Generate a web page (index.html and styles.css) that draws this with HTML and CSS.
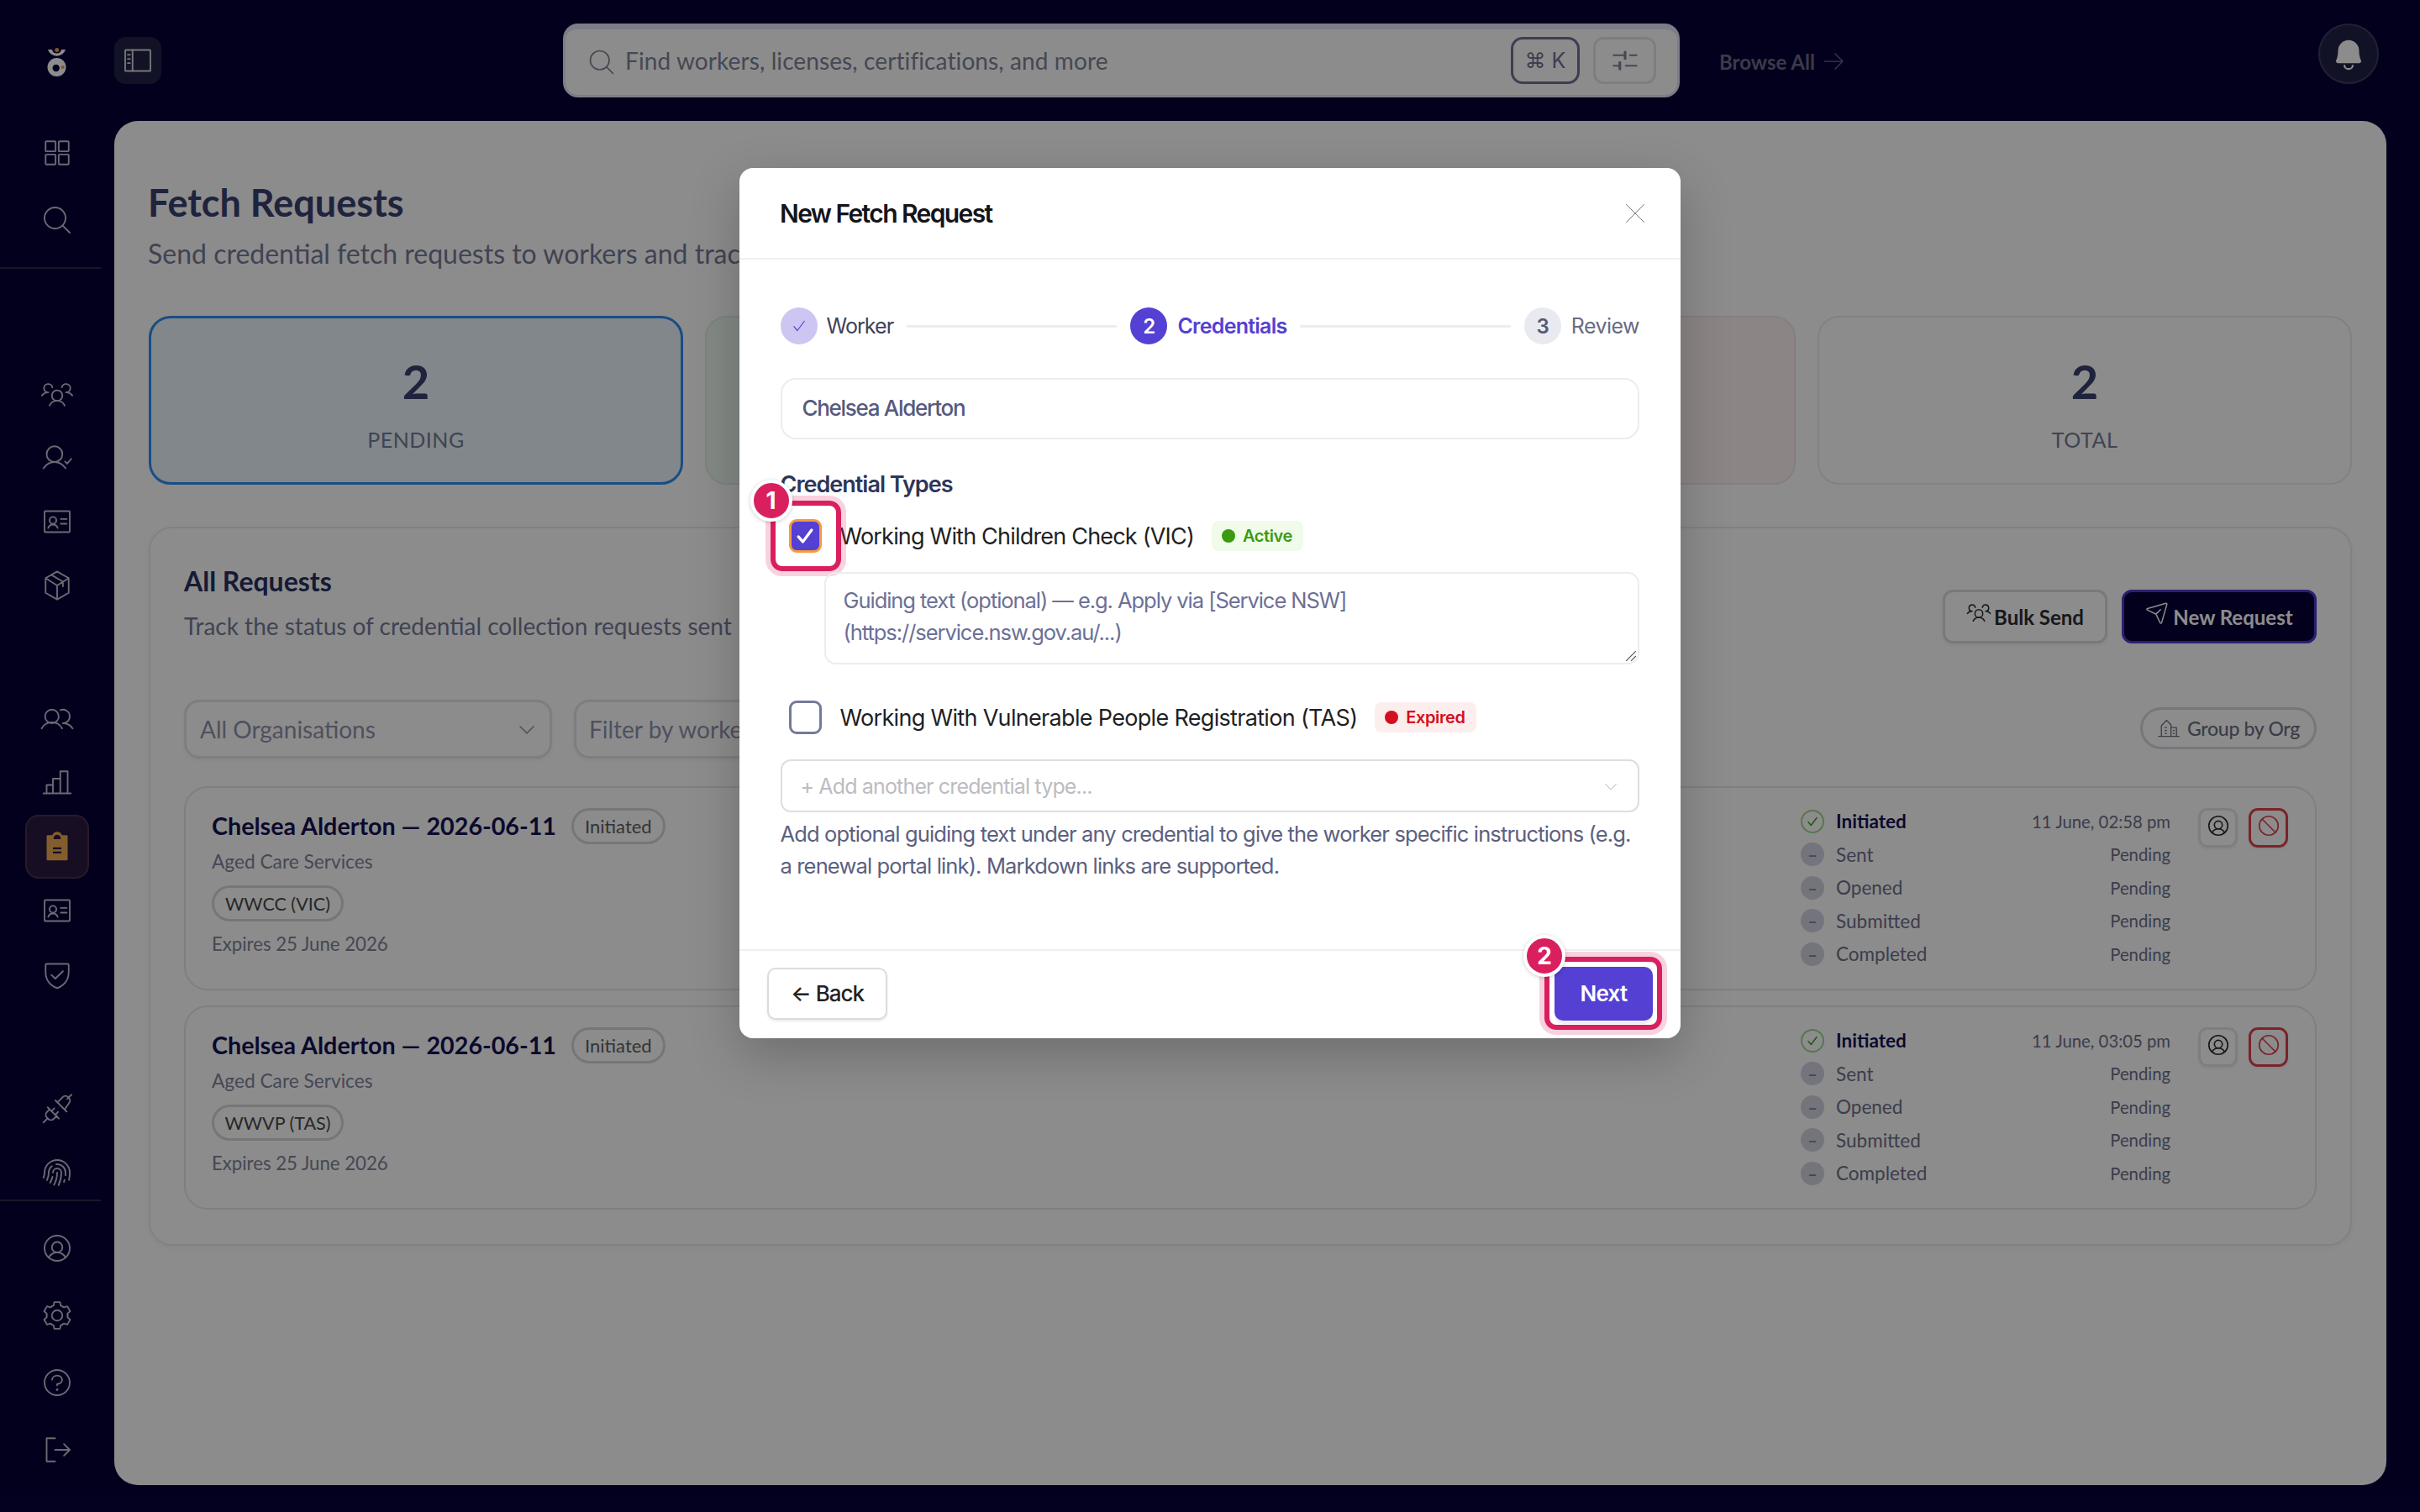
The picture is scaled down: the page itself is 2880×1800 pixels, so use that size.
FILE: index.html
```html
<!DOCTYPE html>
<html lang="en">
<head>
<meta charset="utf-8">
<title>Fetch Requests</title>
<link rel="stylesheet" href="styles.css">
</head>
<body>
<svg class="defs" width="0" height="0" aria-hidden="true">
  <defs>
    <symbol id="i-grid" viewBox="0 0 256 256"><rect x="40" y="40" width="76" height="76" rx="6"/><rect x="140" y="40" width="76" height="76" rx="6"/><rect x="40" y="140" width="76" height="76" rx="6"/><rect x="140" y="140" width="76" height="76" rx="6"/></symbol>
    <symbol id="i-search" viewBox="0 0 256 256"><circle cx="112" cy="112" r="80"/><path d="M168.6 168.6 224 224"/></symbol>
    <symbol id="i-users3" viewBox="0 0 256 256"><circle cx="128" cy="140" r="40"/><path d="M196 116a59.8 59.8 0 0 1 48 24M12 140a59.8 59.8 0 0 1 48-24M70.4 216a64.1 64.1 0 0 1 115.2 0M60 116a32 32 0 1 1 31.4-38M164.6 78A32 32 0 1 1 196 116"/></symbol>
    <symbol id="i-usercheck" viewBox="0 0 256 256"><circle cx="108" cy="100" r="60"/><path d="M24 208c20.6-30 49.6-48 84-48s63.4 18 84 48M188 156l16 16 32-36"/></symbol>
    <symbol id="i-idcard" viewBox="0 0 256 256"><rect x="32" y="48" width="192" height="160" rx="6"/><circle cx="96" cy="118" r="26"/><path d="M60 176a38 38 0 0 1 72 0M156 108h44M156 144h44"/></symbol>
    <symbol id="i-package" viewBox="0 0 256 256"><path d="M128 22 216 72v112l-88 50-88-50V72ZM40 72l88 56 88-56M128 128v106M84 47l88 52v36"/></symbol>
    <symbol id="i-users" viewBox="0 0 256 256"><circle cx="88" cy="108" r="52"/><path d="M10.2 200a88 88 0 0 1 155.6 0M172 160a87.9 87.9 0 0 1 73.8 40M152.7 59.7A52 52 0 1 1 172 160"/></symbol>
    <symbol id="i-chart" viewBox="0 0 256 256"><path d="M48 208v-64h48M96 208V96h56M152 208V40h56v168M232 208H24"/></symbol>
    <symbol id="i-shield" viewBox="0 0 256 256"><path d="M216 112V56a8 8 0 0 0-8-8H48a8 8 0 0 0-8 8v56c0 96 88 120 88 120s88-24 88-120ZM172 104l-58 56-30-28"/></symbol>
    <symbol id="i-plug" viewBox="0 0 256 256"><path d="M115 64l85 85M130 79l40-40a30 30 0 0 1 42 0l5 5a30 30 0 0 1 0 42l-32 48M205 52l32-31M56 117l85 85M71 132l-21 21a30 30 0 0 0 0 42l10 10a30 30 0 0 0 42 0l24-24M50 205l-26 27M85 146l22-22M113 174l22-22"/></symbol>
    <symbol id="i-finger" viewBox="0 0 256 256"><path d="M50.7 184.9A127.5 127.5 0 0 0 64 128a63.9 63.9 0 0 1 24-50M128 128a191.1 191.1 0 0 1-24 93M96 128a32 32 0 0 1 64 0 223.1 223.1 0 0 1-21.3 95.4M218.6 184a289.5 289.5 0 0 0 5.4-56 96 96 0 0 0-192 0 95.8 95.8 0 0 1-8 38.4M92.8 160a158.9 158.9 0 0 1-18.7 44.7M120.8 64.5A64 64 0 0 1 192 128c0 6.7-.2 13.4-.6 20M183.9 184c-1.2 5.4-2.5 10.7-4 16"/></symbol>
    <symbol id="i-usercircle" viewBox="0 0 256 256"><circle cx="128" cy="128" r="96"/><circle cx="128" cy="120" r="40"/><path d="M63.8 199.4a72 72 0 0 1 128.4 0"/></symbol>
    <symbol id="i-gear" viewBox="0 0 256 256"><circle cx="128" cy="128" r="40"/><g transform="translate(128 128)"><path id="tooth" d="M-40-69.3-27.4-75.2-21.6-101.7H21.6L27.4-75.2 40-69.3"/><use href="#tooth" transform="rotate(60)"/><use href="#tooth" transform="rotate(120)"/><use href="#tooth" transform="rotate(180)"/><use href="#tooth" transform="rotate(240)"/><use href="#tooth" transform="rotate(300)"/></g></symbol>
    <symbol id="i-help" viewBox="0 0 256 256"><circle cx="128" cy="128" r="96"/><path d="M128 148v-10c20 0 38-12 38-32s-18-32-38-32-38 12-38 32"/><circle class="dot" cx="128" cy="182" r="9"/></symbol>
    <symbol id="i-signout" viewBox="0 0 256 256"><path d="M112 40H48v176h64M112 128h112M180 84l44 44-44 44"/></symbol>
    <symbol id="i-sidebar" viewBox="0 0 256 256"><rect x="32" y="48" width="192" height="160" rx="4"/><path d="M88 48v160M52 84h16M52 116h16M52 148h16"/></symbol>
    <symbol id="i-sliders" viewBox="0 0 256 256"><path d="M40 88h84M164 88h52M124 60v56M132 60v56M172 88h8M40 168h44M132 168h84M92 140v56M84 140v56"/></symbol>
    <symbol id="i-arrow" viewBox="0 0 256 256"><path d="M40 128h176M144 56l72 72-72 72"/></symbol>
    <symbol id="i-chevron" viewBox="0 0 256 256"><path d="M48 96l80 80 80-80"/></symbol>
    <symbol id="i-plane" viewBox="0 0 256 256"><path d="M210.3 35.9 22.3 88.9a8 8 0 0 0-1.2 15L107 145a8 8 0 0 1 3.8 3.8l40.7 86a8 8 0 0 0 15-1.2l53.6-188a8 8 0 0 0-9.8-9.7ZM109.8 146.2 155 101"/></symbol>
    <symbol id="i-building" viewBox="0 0 256 256"><path d="M16 216h224M48 216V100l56-60 48 52v124M152 120h60v96M88 120h16M88 152h16M88 184h16M176 152h12M176 184h12"/></symbol>
    <symbol id="i-ban" viewBox="0 0 256 256"><circle cx="128" cy="128" r="96"/><path d="M60 60l136 136"/></symbol>
    <symbol id="i-check" viewBox="0 0 256 256"><path d="M56 136l48 56 96-128"/></symbol>
    <symbol id="i-x" viewBox="0 0 256 256"><path d="M32 32l192 192M224 32 32 224"/></symbol>
  </defs>
</svg>

<div class="app">
  <aside class="sidebar">
    <svg class="logo" viewBox="0 0 23 34" aria-hidden="true">
      <path class="logo-body" d="M1 2h5a5.600 5.600 0 0 0 11 0h5a11 11 0 0 1-21 0Z"/>
      <circle class="logo-body" cx="11.500" cy="23" r="11"/>
      <circle class="logo-hole" cx="10.700" cy="24" r="4.200"/>
      <circle class="logo-dot" cx="11.700" cy="2.500" r="2.500"/>
      <circle class="logo-dot" cx="18.700" cy="23" r="2"/>
    </svg>
    <nav class="nav nav-a">
      <a class="nav-item"><svg class="ico"><use href="#i-grid"/></svg></a>
      <a class="nav-item"><svg class="ico"><use href="#i-search"/></svg></a>
    </nav>
    <div class="side-rule"></div>
    <nav class="nav nav-b">
      <a class="nav-item"><svg class="ico"><use href="#i-users3"/></svg></a>
      <a class="nav-item"><svg class="ico"><use href="#i-usercheck"/></svg></a>
      <a class="nav-item"><svg class="ico"><use href="#i-idcard"/></svg></a>
      <a class="nav-item"><svg class="ico"><use href="#i-package"/></svg></a>
    </nav>
    <nav class="nav nav-c">
      <a class="nav-item"><svg class="ico"><use href="#i-users"/></svg></a>
      <a class="nav-item"><svg class="ico"><use href="#i-chart"/></svg></a>
      <a class="nav-item is-active">
        <svg class="ico-clip" viewBox="0 0 256 256"><path class="clip-body" d="M200 40h-36a38 38 0 0 0-72 0H56a8 8 0 0 0-8 8v176a8 8 0 0 0 8 8h144a8 8 0 0 0 8-8V48a8 8 0 0 0-8-8Z"/><path class="clip-marks" d="M96 140h64M96 172h64M108 64a20 20 0 0 1 40 0Z"/></svg>
      </a>
      <a class="nav-item"><svg class="ico"><use href="#i-idcard"/></svg></a>
      <a class="nav-item"><svg class="ico"><use href="#i-shield"/></svg></a>
    </nav>
    <nav class="nav nav-d">
      <a class="nav-item"><svg class="ico"><use href="#i-plug"/></svg></a>
      <a class="nav-item"><svg class="ico"><use href="#i-finger"/></svg></a>
    </nav>
    <div class="side-rule side-rule-flush"></div>
    <nav class="nav nav-e">
      <a class="nav-item"><svg class="ico"><use href="#i-usercircle"/></svg></a>
      <a class="nav-item"><svg class="ico"><use href="#i-gear"/></svg></a>
      <a class="nav-item"><svg class="ico"><use href="#i-help"/></svg></a>
      <a class="nav-item"><svg class="ico"><use href="#i-signout"/></svg></a>
    </nav>
  </aside>

  <div class="content">
    <header class="topbar">
      <button class="toggle"><svg class="ico"><use href="#i-sidebar"/></svg></button>
      <div class="search">
        <svg class="ico search-ico"><use href="#i-search"/></svg>
        <span class="search-text">Find workers, licenses, certifications, and more</span>
        <span class="kbd">⌘ K</span>
        <span class="filter"><svg class="ico"><use href="#i-sliders"/></svg></span>
      </div>
      <a class="browse">Browse All <svg class="ico browse-ico"><use href="#i-arrow"/></svg></a>
      <button class="bell">
        <svg class="bell-ico" viewBox="0 0 256 256"><path d="M221.800 175.900C216.300 166.400 208 139.300 208 104a80 80 0 1 0-160 0c0 35.300-8.300 62.400-13.800 71.900A16 16 0 0 0 48 200h160a16 16 0 0 0 13.800-24.100Z"/><path class="bell-ring" d="M96 212a32 32 0 0 0 64 0"/></svg>
      </button>
    </header>

    <main class="panel">
      <h1 class="page-title">Fetch Requests</h1>
      <p class="page-sub">Send credential fetch requests to workers and track</p>

      <section class="stats">
        <div class="stat stat-pending"><div class="stat-num">2</div><div class="stat-label">PENDING</div></div>
        <div class="stat stat-done"></div>
        <div class="stat stat-fail"></div>
        <div class="stat"><div class="stat-num">2</div><div class="stat-label">TOTAL</div></div>
      </section>

      <section class="requests">
        <div class="req-head">
          <div>
            <h2 class="req-title">All Requests</h2>
            <p class="req-sub">Track the status of credential collection requests sent</p>
          </div>
          <div class="req-actions">
            <button class="btn btn-ghost"><svg class="ico btn-ico"><use href="#i-users3"/></svg>Bulk Send</button>
            <button class="btn btn-dark"><svg class="ico btn-ico"><use href="#i-plane"/></svg>New Request</button>
          </div>
        </div>

        <div class="toolbar">
          <div class="select">All Organisations <svg class="ico sel-chev"><use href="#i-chevron"/></svg></div>
          <div class="filter-input">Filter by worker</div>
          <button class="group-btn"><svg class="ico group-ico"><use href="#i-building"/></svg>Group by Org</button>
        </div>

        <article class="card">
          <div class="card-main">
            <div class="card-head"><h3 class="card-title">Chelsea Alderton — 2026-06-11</h3><span class="pill">Initiated</span></div>
            <div class="card-org">Aged Care Services</div>
            <span class="pill tag">WWCC (VIC)</span>
            <div class="card-exp">Expires 25 June 2026</div>
          </div>
          <ul class="steps">
            <li class="step step-on"><span class="dot-ok"><svg class="ico"><use href="#i-check"/></svg></span><span class="step-name">Initiated</span><span class="step-val">11 June, 02:58 pm</span></li>
            <li class="step"><span class="dot-off">–</span><span class="step-name">Sent</span><span class="step-val">Pending</span></li>
            <li class="step"><span class="dot-off">–</span><span class="step-name">Opened</span><span class="step-val">Pending</span></li>
            <li class="step"><span class="dot-off">–</span><span class="step-name">Submitted</span><span class="step-val">Pending</span></li>
            <li class="step"><span class="dot-off">–</span><span class="step-name">Completed</span><span class="step-val">Pending</span></li>
          </ul>
          <div class="card-btns">
            <button class="mini"><svg class="ico"><use href="#i-usercircle"/></svg></button>
            <button class="mini mini-red"><svg class="ico"><use href="#i-ban"/></svg></button>
          </div>
        </article>

        <article class="card">
          <div class="card-main">
            <div class="card-head"><h3 class="card-title">Chelsea Alderton — 2026-06-11</h3><span class="pill">Initiated</span></div>
            <div class="card-org">Aged Care Services</div>
            <span class="pill tag">WWVP (TAS)</span>
            <div class="card-exp">Expires 25 June 2026</div>
          </div>
          <ul class="steps">
            <li class="step step-on"><span class="dot-ok"><svg class="ico"><use href="#i-check"/></svg></span><span class="step-name">Initiated</span><span class="step-val">11 June, 03:05 pm</span></li>
            <li class="step"><span class="dot-off">–</span><span class="step-name">Sent</span><span class="step-val">Pending</span></li>
            <li class="step"><span class="dot-off">–</span><span class="step-name">Opened</span><span class="step-val">Pending</span></li>
            <li class="step"><span class="dot-off">–</span><span class="step-name">Submitted</span><span class="step-val">Pending</span></li>
            <li class="step"><span class="dot-off">–</span><span class="step-name">Completed</span><span class="step-val">Pending</span></li>
          </ul>
          <div class="card-btns">
            <button class="mini"><svg class="ico"><use href="#i-usercircle"/></svg></button>
            <button class="mini mini-red"><svg class="ico"><use href="#i-ban"/></svg></button>
          </div>
        </article>
      </section>
    </main>
  </div>
</div>

<div class="scrim"></div>

<div class="modal" role="dialog">
  <header class="m-head">
    <h2 class="m-title">New Fetch Request</h2>
    <svg class="ico m-close"><use href="#i-x"/></svg>
  </header>
  <div class="m-body">
    <div class="stepper">
      <span class="num num-done"><svg class="ico"><use href="#i-check"/></svg></span><span class="s-label s-first">Worker</span>
      <span class="s-line"></span>
      <span class="num num-now">2</span><span class="s-label s-now">Credentials</span>
      <span class="s-line"></span>
      <span class="num num-next">3</span><span class="s-label s-next">Review</span>
    </div>
    <div class="m-input">Chelsea Alderton</div>
    <h3 class="m-section">Credential Types</h3>

    <div class="cred cred-first">
      <span class="checkbox is-checked">
        <svg class="ico"><use href="#i-check"/></svg>
        <span class="ring ring-check"></span>
        <span class="marker marker-1">1</span>
      </span>
      <span class="cred-name">Working With Children Check (VIC)</span>
      <span class="badge badge-ok"><i class="badge-dot"></i>Active</span>
    </div>
    <div class="m-textarea">Guiding text (optional) — e.g. Apply via [Service NSW] (https://service.nsw.gov.au/...)
      <svg class="grip" viewBox="0 0 12 12"><path d="M11 1 1 11M11 6 6 11"/></svg>
    </div>

    <div class="cred cred-second">
      <span class="checkbox"></span>
      <span class="cred-name">Working With Vulnerable People Registration (TAS)</span>
      <span class="badge badge-bad"><i class="badge-dot"></i>Expired</span>
    </div>

    <div class="m-select">+ Add another credential type... <svg class="ico m-chev"><use href="#i-chevron"/></svg></div>
    <p class="m-help">Add optional guiding text under any credential to give the worker specific instructions (e.g. a renewal portal link). Markdown links are supported.</p>
  </div>
  <footer class="m-foot">
    <button class="m-back">← Back</button>
    <button class="m-next">Next
      <span class="ring ring-next"></span>
      <span class="marker marker-2">2</span>
    </button>
  </footer>
</div>
</body>
</html>
```
FILE: styles.css
```css
* { box-sizing: border-box; }
html, body { margin: 0; padding: 0; }
body { width: 2880px; height: 1800px; overflow: hidden; position: relative; background: #070038; font-family: "Lato", "Liberation Sans", sans-serif; }
h1, h2, h3, p, ul { margin: 0; padding: 0; }
ul { list-style: none; }
button { font-family: inherit; background: none; border: 0; padding: 0; cursor: pointer; }
.defs { position: absolute; }
.ico { display: block; width: 40px; height: 40px; fill: none; stroke: currentColor; stroke-width: 12; stroke-linecap: round; stroke-linejoin: round; overflow: visible; }
#i-help .dot { fill: currentColor; stroke: none; }

.app { display: flex; width: 2880px; height: 1800px; }

/* sidebar */
.sidebar { width: 136px; flex: none; display: flex; flex-direction: column; color: #c3c3d0; }
.logo { display: block; width: 23px; height: 34px; margin: 57px 0 0 56px; flex: none; }
.logo-body { fill: #fff; }
.logo-hole { fill: #070038; }
.logo-dot { fill: #f59a3d; }
.nav { display: flex; flex-direction: column; align-items: center; width: 136px; }
.nav-item { display: flex; align-items: center; justify-content: center; width: 76px; height: 76px; border-radius: 16px; border: 2px solid transparent; flex: none; }
.nav-a { margin-top: 51px; }
.nav-a .nav-item, .nav-e .nav-item { height: 80px; }
.side-rule { height: 2px; width: 120px; margin-top: 16px; background: #2b2a4d; flex: none; }
.side-rule-flush { margin-top: 0; }
.nav-b { margin-top: 111px; }
.nav-c { margin-top: 83px; }
.nav-d { margin-top: 90px; gap: 12px; }
.nav-d .nav-item { height: 64px; }
.nav-e { margin-top: 16px; }
.is-active { background: #2a1b41; border-color: #4c3048; }
.ico-clip { width: 40px; height: 40px; display: block; }
.clip-body { fill: #f0aa55; }
.clip-marks { fill: #2a1b41; stroke: #2a1b41; stroke-width: 14; }

/* top bar */
.content { flex: 1; min-width: 0; display: flex; flex-direction: column; padding: 0 40px 32px 0; }
.topbar { display: flex; align-items: flex-start; height: 144px; flex: none; padding-top: 28px; }
.toggle { width: 56px; height: 56px; margin-top: 16px; border-radius: 14px; background: #212148; color: #d8d8d8; display: flex; align-items: center; justify-content: center; }
.search { display: flex; align-items: center; width: 1329px; height: 88px; margin-left: 478px; padding: 0 25px 0 25px; border: 3px solid #e1e6f5; border-top-width: 7px; border-radius: 18px; background: #fff; color: #7f8397; }
.search-ico { width: 36px; height: 36px; margin-right: 10px; flex: none; }
.search-text { font-size: 28px; flex: 1; white-space: nowrap; letter-spacing: 0.1px; margin-top: -4px; }
.kbd { display: flex; align-items: center; justify-content: center; width: 82px; height: 56px; margin-top: -4px; border: 3px solid #6d7196; border-radius: 14px; font-size: 25px; color: #6d7196; font-family: "Inter", "DejaVu Sans", sans-serif; }
.filter { display: flex; align-items: center; justify-content: center; width: 75px; height: 56px; margin: -4px 0 0 16px; border: 3px solid #e6e6ea; border-radius: 12px; color: #7f8397; }
.browse { display: flex; align-items: center; gap: 6px; margin: 29px 0 0 47px; font-size: 24px; font-weight: 700; color: #686c84; white-space: nowrap; }
.browse-ico { width: 32px; height: 32px; stroke-width: 10; }
.bell { display: flex; align-items: center; justify-content: center; width: 72px; height: 72px; margin-left: auto; margin-right: 9px; border-radius: 50%; background: #212148; border: 2px solid #3c3c60; }
.bell-ico { width: 40px; height: 40px; display: block; fill: #fff; }
.bell-ring { fill: none; stroke: #fff; stroke-width: 14; }

/* main panel */
.panel { flex: 1; min-height: 0; background: #fff; border-radius: 28px; padding: 69px 41px 0; overflow: hidden; }
.page-title { font-size: 45px; line-height: 56px; font-weight: 700; color: #39416f; margin-left: -1px; }
.page-sub { font-size: 32px; line-height: 40px; margin-top: 13px; color: #767a97; white-space: nowrap; margin-left: -1px; }
.stats { display: grid; grid-template-columns: repeat(4, 636px); gap: 26px; margin-top: 54px; }
.stat { height: 201px; border: 2px solid #ececec; border-radius: 26px; padding-top: 44px; text-align: center; }
.stat-num { font-size: 56px; line-height: 64px; font-weight: 700; color: #39416f; }
.stat-label { font-size: 25px; line-height: 32px; margin-top: 21px; color: #767a97; letter-spacing: .5px; }
.stat-pending { background: #ecf6fb; border: 3px solid #2f8cf0; padding-top: 43px; }
.stat-done { background: #eefaf0; border-color: #e4efe6; }
.stat-fail { background: #fff3f2; border-color: #f3e6e6; }

.requests { margin-top: 50px; border: 2px solid #ececec; border-radius: 28px; padding: 43px 40px 41px; box-shadow: 0 2px 6px rgba(0,0,0,.05); }
.req-head { display: flex; justify-content: space-between; align-items: flex-start; height: 94px; }
.req-title { font-size: 32px; line-height: 40px; font-weight: 700; color: #283062; }
.req-sub { font-size: 28px; line-height: 36px; margin-top: 15px; color: #767a97; white-space: nowrap; }
.req-actions { display: flex; gap: 17px; margin-top: 30px; }
.btn { display: flex; align-items: center; justify-content: center; height: 64px; font-size: 24px; font-weight: 700; border-radius: 12px; gap: 3px; }
.btn-ico { width: 30px; height: 30px; margin-top: -10px; stroke-width: 13; }
.btn-ghost { width: 196px; background: #fff; border: 3px solid #dcdcdc; color: #2d2d36; box-shadow: 0 2px 4px rgba(0,0,0,.06); }
.btn-dark { width: 232px; background: #070038; border: 3px solid #4d39d0; color: #fff; }
.toolbar { display: flex; align-items: center; gap: 26px; height: 70px; margin-top: 67px; }
.select, .filter-input { display: flex; align-items: center; height: 70px; border: 3px solid #e6e6ec; border-radius: 18px; font-size: 28px; color: #8f92ab; box-shadow: 0 2px 4px rgba(0,0,0,.05); white-space: nowrap; }
.select { width: 438px; padding-left: 16px; justify-content: space-between; padding-right: 14px; }
.sel-chev { width: 26px; height: 26px; stroke-width: 14; }
.filter-input { width: 420px; padding-left: 15px; }
.group-btn { display: flex; align-items: center; gap: 8px; height: 50px; width: 210px; justify-content: center; margin: -2px 0 0 auto; border: 3px solid #d9d9dd; border-radius: 25px; font-size: 23px; letter-spacing: -0.3px; font-weight: 500; color: #6c6f80; }
.group-ico { width: 28px; height: 28px; stroke-width: 12; }
.card { display: flex; height: 243px; margin-top: 18px; border: 2px solid #e8e8ee; border-radius: 28px; padding: 24px 0 0 31px; }
.toolbar + .card { margin-top: 33px; }
.card-main { flex: 1; min-width: 0; }
.card-head { display: flex; align-items: center; gap: 18px; }
.card-title { font-size: 28.700px; line-height: 43px; font-weight: 700; color: #141252; white-space: nowrap; }
.pill { display: inline-flex; align-items: center; height: 43px; padding: 0 13px; border: 3px solid #d8d8d8; border-radius: 22px; font-size: 22px; color: #5e5e60; white-space: nowrap; }
.tag { display: flex; width: 157px; margin-top: 12px; color: #484848; justify-content: center; padding: 0; font-size: 21.5px; }
.card-org { font-size: 22.7px; line-height: 32px; margin-top: 5px; color: #80839c; }
.card-exp { font-size: 22.2px; line-height: 32px; margin-top: 11px; color: #7f8299; }
.steps { width: 440px; margin: -4px 33px 0 0; flex: none; }
.step { display: flex; align-items: center; height: 39.500px; font-size: 22.5px; color: #6d708a; }
.step-name { margin-left: 14px; }
.step-val { margin-left: auto; font-size: 20.300px; color: #6d708a; }
.step-on .step-name { font-weight: 700; color: #141252; }
.dot-ok { display: flex; align-items: center; justify-content: center; width: 28px; height: 28px; border-radius: 50%; border: 2px solid #9fd98c; color: #3a9c10; flex: none; }
.dot-ok .ico { width: 18px; height: 18px; stroke-width: 20; }
.dot-off { display: flex; align-items: center; justify-content: center; width: 28px; height: 28px; border-radius: 50%; background: #d3d5e2; color: #7d8099; font-size: 20px; font-weight: 700; flex: none; }
.card-btns { display: flex; gap: 13px; width: 139px; flex: none; }
.mini { width: 47px; height: 47px; border: 3px solid #e6e6ec; border-radius: 11px; color: #2a2a30; display: flex; justify-content: center; padding-top: 3px; box-shadow: 0 2px 3px rgba(0,0,0,.06); }
.mini .ico { width: 30px; height: 30px; stroke-width: 14; }
.mini-red { border-color: #e0404c; color: #e0404c; }

/* scrim */
.scrim { position: absolute; inset: 0; background: rgba(0,0,0,.45); }

/* modal */
.modal { position: absolute; left: 880px; top: 200px; width: 1120px; height: 1036px; display: flex; flex-direction: column; background: #fff; border-radius: 16px; box-shadow: 0 20px 60px rgba(0,0,0,.22); font-family: "Inter", "Liberation Sans", sans-serif; letter-spacing: -0.5px; }
.m-head { display: flex; align-items: center; justify-content: space-between; height: 109px; flex: none; padding: 0 40px 0 48px; border-bottom: 2px solid #f0f0f3; }
.m-title { font-size: 30px; font-weight: 600; color: #14141a; letter-spacing: -1.6px; }
.m-close { width: 28px; height: 28px; color: #777; stroke-width: 9; }
.m-body { flex: 1; padding: 57px 49px 0 48.500px; }
.stepper { display: flex; align-items: center; height: 44px; }
.num { display: flex; align-items: center; justify-content: center; width: 44px; height: 44px; border-radius: 50%; font-size: 24px; font-weight: 600; flex: none; }
.num-done { background: #cdc6f2; color: #5440d3; }
.num-done .ico { width: 22px; height: 22px; stroke-width: 14; }
.num-now { background: #5440d3; color: #fff; }
.num-next { background: #e9eaf0; color: #565a75; }
.s-label { font-size: 25px; margin-left: 12px; color: #3f4158; letter-spacing: -0.55px; }
.s-first { letter-spacing: -0.95px; margin-left: 11px; }
.s-now { color: #5440d3; font-weight: 600; letter-spacing: -0.75px; }
.s-next { color: #696c83; }
.s-line { flex: 1; height: 3px; background: #ececf2; margin: 0 16px; }
.m-input { display: flex; align-items: center; height: 73px; margin-top: 40px; padding: 0 0 3px 24px; border: 2.500px solid #ececf2; border-radius: 18px; font-size: 26px; font-weight: 500; color: #565a7e; letter-spacing: -1.3px; }
.m-section { font-size: 27px; line-height: 36px; margin-top: 36px; font-weight: 600; color: #2e3558; letter-spacing: -1px; }
.cred { display: flex; align-items: center; height: 40px; margin-left: 10px; }
.cred-first { margin-top: 23px; }
.cred-second { margin-top: 43px; }
.checkbox { position: relative; display: flex; align-items: center; justify-content: center; width: 39px; height: 40px; border: 3px solid #757a9a; border-radius: 9px; flex: none; color: #fff; }
.is-checked { background: #5440d3; border-color: #f59a3d; }
.is-checked .ico { width: 28px; height: 28px; stroke-width: 30; }
.cred-name { margin-left: 22px; font-size: 27px; color: #1f1f24; letter-spacing: -0.8px; white-space: nowrap; }
.cred-second .cred-name { letter-spacing: -0.68px; }
.badge { display: inline-flex; align-items: center; height: 36px; margin-left: 21px; padding: 0 13px 0 12px; border-radius: 8px; font-size: 20px; font-weight: 600; letter-spacing: -0.4px; }
.badge-dot { width: 16px; height: 16px; border-radius: 50%; background: currentColor; margin-right: 9px; }
.badge-ok { background: #f1fbe9; color: #3b9b10; }
.badge-bad { background: #fdeeee; color: #d20f20; }
.m-textarea { position: relative; height: 110px; margin: 23px 0 0 52px; padding: 13px 120px 0 21px; border: 2.500px solid #ececf2; border-radius: 14px; font-size: 25.500px; line-height: 38px; color: #6c7095; letter-spacing: -1.05px; }
.grip { position: absolute; right: 1px; bottom: 1px; width: 14px; height: 14px; fill: none; stroke: #555; stroke-width: 1; }
.m-select { display: flex; align-items: center; justify-content: space-between; height: 63px; margin-top: 30px; padding: 0 22px 0 22px; border: 2.500px solid #dedee2; border-radius: 12px; font-size: 25px; color: #bcbcc2; letter-spacing: -0.85px; }
.m-chev { width: 20px; height: 20px; color: #a8a8b0; stroke-width: 12; }
.m-help { margin-top: 7px; font-size: 25.500px; line-height: 38px; color: #5b6080; letter-spacing: -0.85px; }
.m-foot { display: flex; align-items: center; justify-content: space-between; height: 106px; flex: none; padding: 0 33px 3px; border-top: 2px solid #f0f0f3; }
.m-back { width: 143px; height: 62px; border: 2.500px solid #dcdcdc; border-radius: 10px; font-size: 26px; font-weight: 500; color: #222; background: #fff; letter-spacing: -1px; box-shadow: 0 2px 3px rgba(0,0,0,.08); }
.m-next { position: relative; width: 117px; height: 64px; border-radius: 10px; background: #5440d3; font-size: 26px; font-weight: 600; color: #fff; letter-spacing: -0.8px; box-shadow: 0 4px 0 #efeff2; }

/* callouts over controls */
.ring { position: absolute; border: 6px solid #da1f5e; box-shadow: 0 0 0 6px rgba(218,31,94,.2); }
.ring-check { left: -25px; top: -25px; width: 84px; height: 84px; border-radius: 14px; }
.ring-next { left: -12px; top: -12px; width: 140px; height: 87px; border-radius: 14px; }
.marker { position: absolute; display: flex; align-items: center; justify-content: center; width: 50px; height: 50px; border-radius: 50%; background: #da1f5e; border: 4px solid #fff; color: #fff; font-size: 28px; font-weight: 700; letter-spacing: 0; box-shadow: 0 1px 5px rgba(0,0,0,.2); font-family: "Inter", sans-serif; }
.marker-1 { left: -49px; top: -50px; }
.marker-2 { left: -37px; top: -38px; }
```
